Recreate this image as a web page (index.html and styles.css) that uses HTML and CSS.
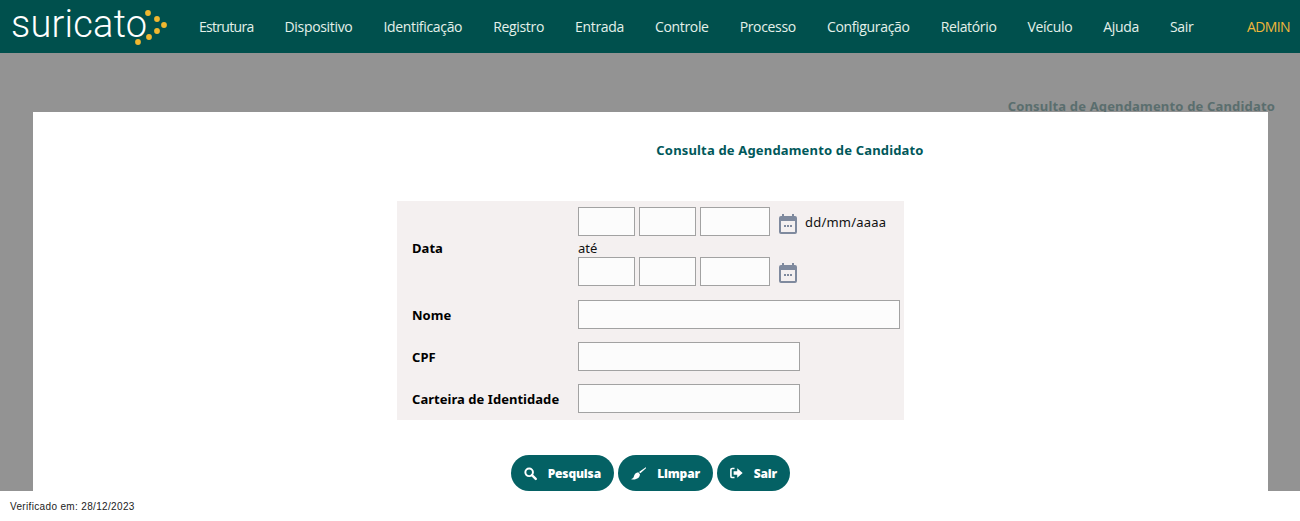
FILE: index.html
```html
<!DOCTYPE html>
<html lang="pt-BR">
<head>
<meta charset="utf-8">
<title>Consulta de Agendamento de Candidato</title>
<link rel="stylesheet" href="styles.css">
</head>
<body>
<header class="topbar">
  <div class="logo">
    <span class="logo-text">suricato</span>
    <svg class="logo-dots" width="32" height="36" viewBox="0 0 32 36">
      <circle cx="13" cy="3" r="2.9"/><circle cx="22" cy="9" r="2.9"/><circle cx="29" cy="15" r="2.9"/>
      <circle cx="22" cy="21" r="2.9"/><circle cx="14" cy="27" r="2.9"/><circle cx="3" cy="32" r="2.9"/>
    </svg>
  </div>
  <nav class="menu">
    <a class="menu-first">Estrutura</a><a>Dispositivo</a><a>Identificação</a><a>Registro</a><a>Entrada</a><a>Controle</a><a>Processo</a><a>Configuração</a><a>Relatório</a><a>Veículo</a><a>Ajuda</a><a>Sair</a>
  </nav>
  <span class="user">ADMIN</span>
</header>
<main class="backdrop">
  <p class="back-title">Consulta de Agendamento de Candidato</p>
  <section class="panel">
    <h1 class="panel-title">Consulta de Agendamento de Candidato</h1>
    <form class="form">
      <label class="label label-data">Data</label>
      <div class="date-field">
        <div class="date-row">
          <input class="input d-s"><input class="input d-s"><input class="input d-l">
          <svg class="cal" viewBox="0 0 18 20"><path d="M3 0h2v2h8V0h2v2h1a2 2 0 0 1 2 2v14a2 2 0 0 1-2 2H2a2 2 0 0 1-2-2V4a2 2 0 0 1 2-2h1zM2 7v11h14V7zM5 11h2v2H5zM8 11h2v2H8zM11 11h2v2h-2z" fill-rule="evenodd"/></svg>
          <span class="hint">dd/mm/aaaa</span>
        </div>
        <span class="ate">até</span>
        <div class="date-row">
          <input class="input d-s"><input class="input d-s"><input class="input d-l">
          <svg class="cal cal-low" viewBox="0 0 18 20"><path d="M3 0h2v2h8V0h2v2h1a2 2 0 0 1 2 2v14a2 2 0 0 1-2 2H2a2 2 0 0 1-2-2V4a2 2 0 0 1 2-2h1zM2 7v11h14V7zM5 11h2v2H5zM8 11h2v2H8zM11 11h2v2h-2z" fill-rule="evenodd"/></svg>
        </div>
      </div>
      <label class="label">Nome</label><input class="input w-full">
      <label class="label">CPF</label><input class="input w-mid">
      <label class="label">Carteira de Identidade</label><input class="input w-mid">
    </form>
    <div class="actions">
      <button class="btn btn-search" type="button">
        <svg width="15" height="15" viewBox="0 0 14 14"><circle cx="5.7" cy="5.7" r="4.2" fill="none" stroke="#fff" stroke-width="2.2"/><path d="M8.8 8.8L13 13" stroke="#fff" stroke-width="2.6" stroke-linecap="round"/></svg>
        Pesquisa
      </button>
      <button class="btn btn-clear" type="button">
        <svg width="19" height="17" viewBox="0 0 18 16"><path d="M17.5.6l.6.8-7 6.4-1.600-1.600zM8.600 6.600l2 2.200c0 3.400-2.800 6-8 6.400-.9 0-2.200-.4-2.400-.8 1.500-.4 2.500-1.200 3-2.400.8-3.200 2.800-5.200 5.400-5.400z" fill="#fff"/></svg>
        Limpar
      </button>
      <button class="btn btn-exit" type="button">
        <svg width="14" height="12" viewBox="0 0 14 12"><path d="M5 1H2.500A1.500 1.500 0 0 0 1 2.500v7A1.500 1.500 0 0 0 2.500 11H5" fill="none" stroke="#fff" stroke-width="1.800"/><path d="M8 .8L14 6l-6 5.200V8H4V4h4z" fill="#fff"/></svg>
        Sair
      </button>
    </div>
  </section>
</main>
<footer class="footer">Verificado em: 28/12/2023</footer>
</body>
</html>
```
FILE: styles.css
```css
* { box-sizing: border-box; }
html, body { margin: 0; height: 521px; overflow: hidden; }
body { display: flex; flex-direction: column; background: #fff; font-family: "Open Sans", sans-serif; }

.topbar { height: 53px; flex: none; display: flex; align-items: center; background: #00504d; }
.logo { width: 199px; flex: none; align-self: flex-start; display: flex; align-items: flex-start; padding: 2px 0 0 11px; height: 53px; }
.logo-text { font-family: Roboto, sans-serif; font-weight: 300; font-size: 38px; line-height: 44px; letter-spacing: .2px; color: #fff; }
.logo-dots { flex: none; fill: #f0b72f; margin: 8px 0 0 -12px; }

.menu { display: flex; gap: 31px; flex: 1; }
.menu a { font-family: "Open Sans", sans-serif; font-size: 14px; letter-spacing: -.33px; color: #e4f1ea; white-space: nowrap; }
.menu .menu-first { letter-spacing: -.7px; }
.user { font-size: 14px; letter-spacing: -.6px; color: #f0b73a; margin-right: 10px; }

.backdrop { position: relative; height: 438px; flex: none; background: #939393; }
.back-title { margin: 0; padding: 44px 25px 0 0; text-align: right; font-family: "Noto Sans", sans-serif; font-size: 13px; font-weight: 700; line-height: 18px; letter-spacing: .17px; color: #5a6e6e; }

.panel { position: absolute; left: 33px; top: 59px; width: 1235px; height: 379px; background: #fff; display: flex; flex-direction: column; align-items: center; }
.panel-title { margin: 0; padding: 29px 0 0 279px; font-family: "Noto Sans", sans-serif; font-size: 13px; font-weight: 700; line-height: 18px; letter-spacing: .17px; color: #00585a; }

.form { margin-top: 42px; width: 507px; height: 219px; padding: 6px 4px 0 15px; background: #f4f0f0; display: grid; grid-template-columns: 166px 1fr; row-gap: 13px; align-items: center; align-content: start; font-family: "Noto Sans", sans-serif; font-size: 13px; color: #111; }
.label { font-weight: 700; letter-spacing: .04px; color: #000; }
.label-data { margin-top: 2px; }

.input { display: block; height: 29px; padding: 0; background: #fcfcfc; border: 1px solid #a2a2a2; border-radius: 0; }
.w-full { width: 322px; }
.w-mid { width: 222px; }
.d-s { width: 57px; }
.d-l { width: 70px; }

.date-field { display: flex; flex-direction: column; align-items: flex-start; padding-bottom: 1px; }
.date-row { display: flex; align-items: center; gap: 4px; }
.ate { display: block; height: 21px; line-height: 24px; }
.cal { width: 18px; height: 20px; margin: 5px 0 0 5px; fill: #7f8a9e; flex: none; }
.cal-low { margin-top: 3px; }
.hint { margin: 0 0 0 4px; letter-spacing: .2px; }

.actions { margin-top: 35px; display: flex; gap: 4px; }
.btn { height: 36px; padding: 0 13px; display: flex; align-items: center; border: 0; border-radius: 18px; background: #046164; color: #fff; font-family: "Open Sans", sans-serif; font-size: 12px; font-weight: 800; letter-spacing: -.15px; }
.btn-search { width: 103px; gap: 11px; }
.btn-clear { width: 95px; gap: 11px; }
.btn-exit { width: 73px; gap: 11px; }

.footer { padding: 10px 0 0 10px; font-family: "Liberation Sans", sans-serif; font-size: 10px; letter-spacing: .34px; line-height: 12px; color: #222; }
```
